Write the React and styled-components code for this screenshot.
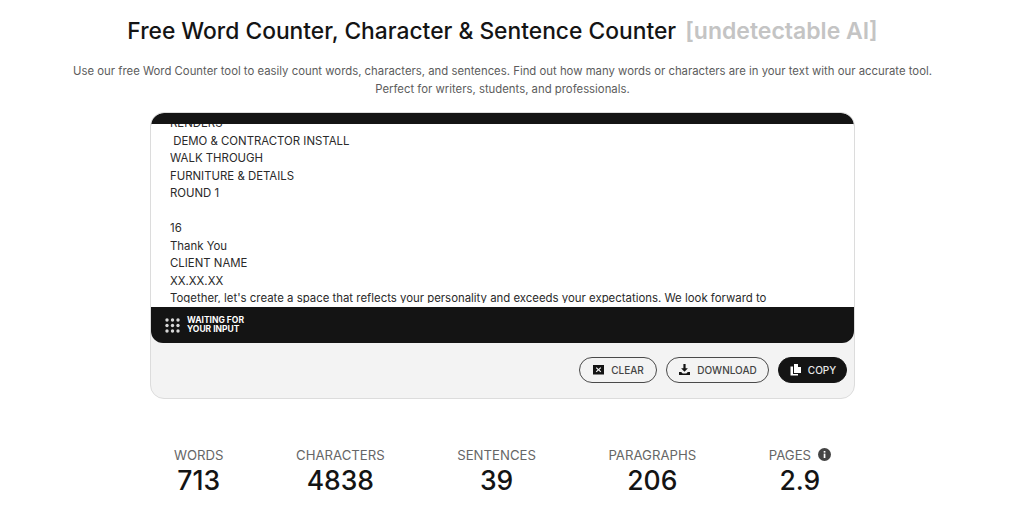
import styled, { createGlobalStyle } from "styled-components";

const GlobalStyle = createGlobalStyle`
  html, body {
    margin: 0;
    padding: 0;
    background: #fff;
    height: 515px;
    overflow: hidden;
  }
`;

const Page = styled.main`
  width: 1005px;
  display: flex;
  flex-direction: column;
  align-items: center;
  padding-top: 16px;
  font-family: Inter, "Liberation Sans", sans-serif;
  color: #141414;
`;
const Title = styled.h1`
  margin: 0;
  font-size: 22.8px;
  line-height: 30px;
  font-weight: 500;
  white-space: pre;
`;
const Faded = styled.span`
  margin-left: 3px;
  font-size: 23px;
  color: #c4c4c4;
  font-weight: 600;
`;
const Intro = styled.p`
  margin: 17px 0 0;
  width: 875px;
  text-align: center;
  font-size: 11.35px;
  line-height: 17.5px;
  color: #5c5c5c;
`;
const Card = styled.section`
  margin-top: 14px;
  width: 705px;
  height: 287px;
  box-sizing: border-box;
  border: 1px solid #dcdcdc;
  border-radius: 14px;
  background: #f3f3f3;
  overflow: hidden;
  display: flex;
  flex-direction: column;
`;
const Editor = styled.div`
  background: #141414;
  border-radius: 13px 13px 12px 12px;
  padding-top: 11px;
  height: 230px;
  box-sizing: border-box;
  display: flex;
  flex-direction: column;
`;
const TextArea = styled.div`
  height: 183px;
  flex: none;
  box-sizing: border-box;
  background: #fff;
  padding: 0 19px 4px;
`;
const TextClip = styled.div`
  height: 100%;
  overflow: hidden;
`;
const TextLines = styled.div`
  margin-top: -9px;
  white-space: pre;
  font-size: 11.4px;
  line-height: 17.5px;
  color: #2a2a2a;
`;
const Status = styled.div`
  flex: 1;
  display: flex;
  align-items: center;
  gap: 7px;
  padding-left: 14px;
  color: #fff;
  font-size: 8.5px;
  line-height: 9px;
  font-weight: 700;
`;
const Dots = styled.svg`
  width: 15px;
  height: 15px;
  fill: #d8d8d8;
`;
const Actions = styled.div`
  flex: 1;
  display: flex;
  align-items: center;
  justify-content: flex-end;
  gap: 9px;
  padding: 0 7px 2px 0;
`;
const Button = styled.button`
  width: ${(p) => p.$width}px;
  height: 26px;
  box-sizing: border-box;
  display: flex;
  align-items: center;
  justify-content: center;
  gap: 6px;
  padding: 0;
  border-radius: 13px;
  border: 1px solid ${(p) => (p.$dark ? "#141414" : "#4a4a4a")};
  background: ${(p) => (p.$dark ? "#141414" : "transparent")};
  color: ${(p) => (p.$dark ? "#e8e8e8" : "#444")};
  font-family: inherit;
  font-size: 10px;
  font-weight: 500;
`;
const ButtonIcon = styled.svg`
  width: 13px;
  height: 13px;
  fill: ${(p) => (p.$light ? "#fff" : "#141414")};
`;
const Stats = styled.div`
  margin-top: 48px;
  display: flex;
  gap: 72.5px;
`;
const Stat = styled.div`
  display: flex;
  flex-direction: column;
  align-items: center;
`;
const StatLabel = styled.div`
  display: flex;
  align-items: center;
  gap: 7px;
  font-size: 13.2px;
  line-height: 16px;
  color: #666;
`;
const StatValue = styled.div`
  margin-top: 1px;
  font-size: 26.5px;
  line-height: 32px;
  font-weight: 450;
  color: #141414;
`;
const InfoIcon = styled.svg`
  width: 13px;
  height: 13px;
  margin-top: -2px;
`;

const lines = [
  "RENDERS",
  " DEMO & CONTRACTOR INSTALL",
  "WALK THROUGH",
  "FURNITURE & DETAILS",
  "ROUND 1",
  "",
  "16",
  "Thank You",
  "CLIENT NAME",
  "XX.XX.XX",
  "Together, let's create a space that reflects your personality and exceeds your expectations. We look forward to",
];

const stats = [
  { label: "WORDS", value: "713" },
  { label: "CHARACTERS", value: "4838" },
  { label: "SENTENCES", value: "39" },
  { label: "PARAGRAPHS", value: "206" },
  { label: "PAGES", value: "2.9", info: true },
];

export default function App() {
  return (
    <>
      <GlobalStyle />
      <Page>
        <Title>
          Free Word Counter, Character &amp; Sentence Counter <Faded>[undetectable AI]</Faded>
        </Title>
        <Intro>
          Use our free Word Counter tool to easily count words, characters, and sentences. Find out how many words or
          characters are in your text with our accurate tool. Perfect for writers, students, and professionals.
        </Intro>
        <Card>
          <Editor>
            <TextArea>
              <TextClip>
                <TextLines>{lines.join("\n")}</TextLines>
              </TextClip>
            </TextArea>
            <Status>
              <Dots viewBox="0 0 15 15">
                {[2, 7.5, 13].map((y) =>
                  [2, 7.5, 13].map((x) => <circle key={`${x}-${y}`} cx={x} cy={y} r="1.7" />)
                )}
              </Dots>
              <div>
                WAITING FOR
                <br />
                YOUR INPUT
              </div>
            </Status>
          </Editor>
          <Actions>
            <Button $width={78}>
              <ButtonIcon viewBox="0 0 13 13">
                <path
                  fillRule="evenodd"
                  d="M1 2h11v9.5H1zM4.6 4.2 3.8 5l1.8 1.7L3.8 8.5l.8.8 1.9-1.8 1.9 1.8.8-.8-1.8-1.8L9.2 5l-.8-.8-1.9 1.8z"
                />
              </ButtonIcon>
              CLEAR
            </Button>
            <Button $width={103}>
              <ButtonIcon viewBox="0 0 13 13">
                <path d="M5.4 1h2.2v4.2h2.3L6.5 8.8 3.1 5.2h2.3zM1 9h2.2l1.5 1.5h3.6L9.8 9H12v3H1z" />
              </ButtonIcon>
              DOWNLOAD
            </Button>
            <Button $dark $width={69}>
              <ButtonIcon $light viewBox="0 0 13 13">
                <path d="M5 1h4v3h3v6H5z" />
                <path d="M1.5 3.5H4V11h5v1.5H1.5z" />
              </ButtonIcon>
              COPY
            </Button>
          </Actions>
        </Card>
        <Stats>
          {stats.map((s) => (
            <Stat key={s.label}>
              <StatLabel>
                {s.label}
                {s.info && (
                  <InfoIcon viewBox="0 0 13 13">
                    <circle cx="6.5" cy="6.5" r="6.5" fill="#444" />
                    <rect x="5.7" y="5.6" width="1.7" height="4.4" fill="#fff" />
                    <rect x="5.7" y="3" width="1.7" height="1.6" fill="#fff" />
                  </InfoIcon>
                )}
              </StatLabel>
              <StatValue>{s.value}</StatValue>
            </Stat>
          ))}
        </Stats>
      </Page>
    </>
  );
}
